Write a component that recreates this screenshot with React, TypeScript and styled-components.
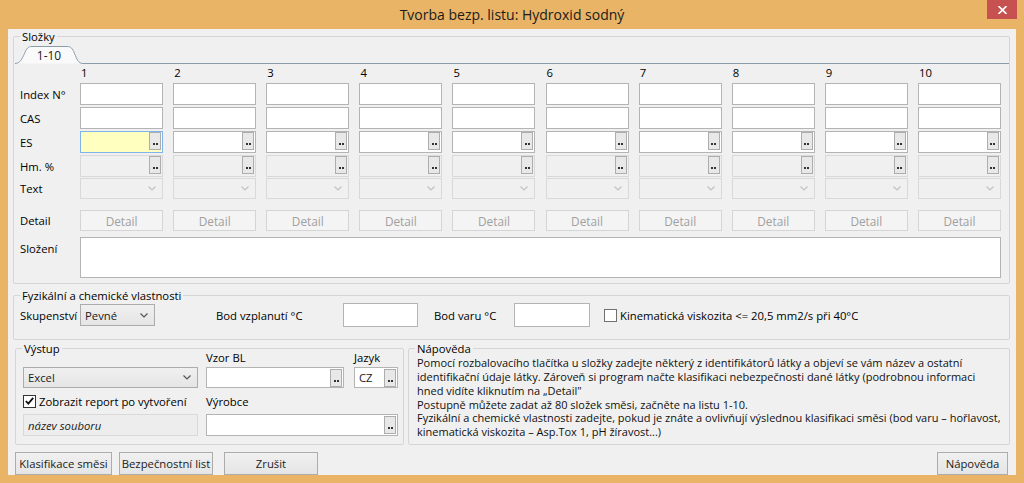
import React from 'react';
import styled, { createGlobalStyle } from 'styled-components';

const GlobalStyle = createGlobalStyle`
  html, body { margin: 0; padding: 0; }
  body {
    width: 1024px;
    height: 483px;
    overflow: hidden;
    font-family: 'Segoe UI', 'Open Sans', 'Noto Sans', sans-serif;
    font-size: 11.3px;
    color: #000;
  }
  * { box-sizing: border-box; }
`;

const Window = styled.div`
  width: 1024px;
  height: 483px;
  background: #e9b466;
  display: flex;
  flex-direction: column;
  padding: 0 8px 8px;
`;

const TitleBar = styled.div`
  height: 29px;
  display: grid;
  grid-template-columns: 1fr auto 1fr;
  align-items: center;
`;

const Title = styled.div`
  grid-column: 2;
  font-size: 14px;
  color: #1b1b1b;
  padding-bottom: 1px;
`;

const CloseButton = styled.div`
  grid-column: 3;
  justify-self: end;
  align-self: start;
  width: 30px;
  height: 19px;
  margin-right: -1px;
  background: #c75050;
  display: flex;
  align-items: center;
  justify-content: center;
`;

const Body = styled.div`
  flex: 1;
  background: #f0f0f0;
  display: flex;
  flex-direction: column;
  padding: 0 6px 0 5px;
`;

const GroupBox = styled.fieldset<{ $pb: number; $mt?: number; $w?: number }>`
  margin: ${p => p.$mt ?? 0}px 0 0;
  padding: 0 0 ${p => p.$pb}px;
  border: 1px solid #d5d5d5;
  border-radius: 2px;
  min-width: 0;
  ${p => (p.$w ? `width: ${p.$w}px; flex: none;` : 'flex: 1;')}
`;

const Legend = styled.legend`
  padding: 0 2px;
  margin-left: 6px;
  line-height: 15px;
`;

const TabStrip = styled.div`
  display: flex;
  align-items: flex-end;
  height: 18px;
  margin-top: 2px;
  padding-left: 1px;
`;

const Tab = styled.div`
  position: relative;
  width: 68px;
  height: 18px;
  display: flex;
  align-items: center;
  justify-content: center;
  padding-top: 1px;
  font-size: 12px;
  color: #1b1b1b;
`;

const TabShape = styled.svg`
  position: absolute;
  inset: 0;
`;

const TabText = styled.span`
  position: relative;
`;

const TabLine = styled.div`
  flex: 1;
  height: 1px;
  background: #8c9baa;
`;

const GridRow = styled.div<{ $h: number; $mt?: number; $top?: boolean }>`
  display: grid;
  grid-template-columns: 50px repeat(10, 83px);
  column-gap: 10.1px;
  height: ${p => p.$h}px;
  margin-top: ${p => p.$mt ?? 0}px;
  padding-left: 6px;
  align-items: ${p => (p.$top ? 'stretch' : 'center')};
`;

const RowLabel = styled.div<{ $top?: boolean }>`
  white-space: nowrap;
  padding-top: ${p => (p.$top ? 4 : 0)}px;
`;

const ColNum = styled.div`
  align-self: end;
  padding-bottom: 3px;
  padding-left: 1px;
`;

const TextBox = styled.div<{ $disabled?: boolean; $focus?: boolean; $muted?: boolean }>`
  height: 100%;
  display: flex;
  align-items: flex-start;
  justify-content: flex-end;
  padding: 0 1px;
  background: ${p => (p.$focus ? '#ffffbf' : p.$muted ? '#ededed' : p.$disabled ? '#f0f0f0' : '#fff')};
  border: 1px solid ${p => (p.$focus ? '#7eb4ea' : p.$disabled || p.$muted ? '#d9d9d9' : '#b4b4b4')};
`;

const BoxText = styled.span<{ $italic?: boolean }>`
  flex: 1;
  align-self: center;
  padding-left: 3px;
  font-style: ${p => (p.$italic ? 'italic' : 'normal')};
  color: #1b1b1b;
`;

const Ellipsis = styled.div`
  width: 12px;
  height: 18px;
  border: 1px solid #adadad;
  background: #e8e8e8;
  display: flex;
  align-items: flex-end;
  justify-content: center;
  gap: 1px;
  padding-bottom: 4px;
`;

const Dot = styled.span`
  width: 2px;
  height: 2px;
  background: #333;
`;

const Combo = styled.div<{ $disabled?: boolean }>`
  height: 100%;
  display: flex;
  align-items: center;
  justify-content: space-between;
  padding: 0 6px 0 4px;
  background: ${p => (p.$disabled ? '#f0f0f0' : 'linear-gradient(#f0f0f0, #e5e5e5)')};
  border: 1px solid ${p => (p.$disabled ? '#d9d9d9' : '#acacac')};
  color: #1b1b1b;
`;

const DetailButton = styled.div`
  height: 100%;
  display: flex;
  align-items: center;
  justify-content: center;
  background: #f4f4f4;
  border: 1px solid #d5d5d5;
  color: #a0a0a0;
  font-size: 11.8px;
`;

const Memo = styled.div`
  grid-column: 2 / -1;
  background: #fff;
  border: 1px solid #b4b4b4;
`;

const PropsRow = styled.div`
  display: flex;
  align-items: center;
  height: 24px;
  padding-left: 6px;
`;

const Label = styled.div<{ $w?: number; $ml?: number }>`
  white-space: nowrap;
  ${p => (p.$w ? `width: ${p.$w}px; flex: none;` : '')}
  margin-left: ${p => p.$ml ?? 0}px;
`;

const Field = styled.div<{ $w: number; $h: number }>`
  width: ${p => p.$w}px;
  height: ${p => p.$h}px;
  flex: none;
`;

const CheckBox = styled.div<{ $checked?: boolean; $ml?: number }>`
  width: 13px;
  height: 13px;
  flex: none;
  border: 1px solid ${p => (p.$checked ? '#333' : '#707070')};
  background: #fff;
  margin: 0 3px 0 ${p => p.$ml ?? 0}px;
  display: flex;
  align-items: center;
  justify-content: center;
`;

const BoxesRow = styled.div`
  display: flex;
  gap: 4px;
  margin-top: 1px;
  padding-left: 2px;
`;

const OutGrid = styled.div`
  display: grid;
  grid-template-columns: 175px 138px 46px;
  grid-template-rows: 16px 21px 22px 22px;
  column-gap: 8px;
  row-gap: 2px;
  margin-top: -7px;
  padding-left: 7px;
  align-items: center;
`;

const Cell = styled.div<{ $col: number; $end?: boolean; $span?: number }>`
  grid-column: ${p => p.$col} / span ${p => p.$span ?? 1};
  height: 100%;
  display: flex;
  align-items: center;
  white-space: nowrap;
  ${p => (p.$end ? 'justify-self: end; width: 44px;' : '')}
`;

const HelpText = styled.div`
  padding: 0 8px;
  font-size: 11px;
  line-height: 13.8px;
  color: #111;
`;

const HelpLine = styled.div`
  white-space: nowrap;
`;

const ButtonRow = styled.div`
  display: flex;
  height: 23px;
  margin-top: 7px;
  padding: 0 2px;
`;

const Button = styled.div<{ $w: number; $ml?: number }>`
  width: ${p => p.$w}px;
  margin-left: ${p => p.$ml ?? 0}px;
  display: flex;
  align-items: center;
  justify-content: center;
  background: linear-gradient(#f0f0f0, #e5e5e5);
  border: 1px solid #acacac;
  white-space: nowrap;
  color: #1b1b1b;
`;

const Spacer = styled.div`
  flex: 1;
`;

const Chevron = ({ color }: { color: string }) => (
  <svg width="8" height="5" viewBox="0 0 8 5">
    <path d="M0.5 0.5 L4 4 L7.5 0.5" fill="none" stroke={color} strokeWidth="1.2" />
  </svg>
);

const Dots = () => (
  <Ellipsis>
    <Dot />
    <Dot />
  </Ellipsis>
);

const cols = Array.from({ length: 10 }, (_, i) => i + 1);

function App() {
  return (
    <>
      <GlobalStyle />
      <Window>
        <TitleBar>
          <Title>Tvorba bezp. listu: Hydroxid sodný</Title>
          <CloseButton>
            <svg width="9" height="8" viewBox="0 0 9 8">
              <path d="M0.5 0 L8.5 8 M8.5 0 L0.5 8" stroke="#fff" strokeWidth="1.6" />
            </svg>
          </CloseButton>
        </TitleBar>
        <Body>
          <GroupBox $pb={5}>
            <Legend>Složky</Legend>
            <TabStrip>
              <Tab>
                <TabShape width="68" height="18" viewBox="0 0 68 18">
                  <path
                    d="M0 17.5 C5 17.5 7 13 9.5 7.5 C11.5 2.5 13 0.5 17 0.5 L52 0.5 C56 0.5 57.5 2.5 59.5 7.5 C62 13 63 17.5 68 17.5"
                    fill="#fafafa"
                    stroke="#8c9baa"
                  />
                </TabShape>
                <TabText>1-10</TabText>
              </Tab>
              <TabLine />
            </TabStrip>
            <GridRow $h={19}>
              <div />
              {cols.map(c => (
                <ColNum key={c}>{c}</ColNum>
              ))}
            </GridRow>
            <GridRow $h={22}>
              <RowLabel>Index N°</RowLabel>
              {cols.map(c => (
                <TextBox key={c} />
              ))}
            </GridRow>
            <GridRow $h={22} $mt={2}>
              <RowLabel>CAS</RowLabel>
              {cols.map(c => (
                <TextBox key={c} />
              ))}
            </GridRow>
            <GridRow $h={22} $mt={2}>
              <RowLabel>ES</RowLabel>
              {cols.map(c => (
                <TextBox key={c} $focus={c === 1}>
                  <Dots />
                </TextBox>
              ))}
            </GridRow>
            <GridRow $h={22} $mt={2}>
              <RowLabel>Hm. %</RowLabel>
              {cols.map(c => (
                <TextBox key={c} $disabled>
                  <Dots />
                </TextBox>
              ))}
            </GridRow>
            <GridRow $h={21} $mt={1}>
              <RowLabel>Text</RowLabel>
              {cols.map(c => (
                <Combo key={c} $disabled>
                  <span />
                  <Chevron color="#c2c2c2" />
                </Combo>
              ))}
            </GridRow>
            <GridRow $h={21} $mt={11}>
              <RowLabel>Detail</RowLabel>
              {cols.map(c => (
                <DetailButton key={c}>Detail</DetailButton>
              ))}
            </GridRow>
            <GridRow $h={41} $mt={6} $top>
              <RowLabel $top>Složení</RowLabel>
              <Memo />
            </GridRow>
          </GroupBox>

          <GroupBox $pb={7} $mt={4}>
            <Legend>Fyzikální a chemické vlastnosti</Legend>
            <PropsRow>
              <Label $w={60}>Skupenství</Label>
              <Field $w={75} $h={22}>
                <Combo>
                  <span>Pevné</span>
                  <Chevron color="#555" />
                </Combo>
              </Field>
              <Label $w={127} $ml={61}>Bod vzplanutí °C</Label>
              <Field $w={75} $h={24}>
                <TextBox />
              </Field>
              <Label $w={80} $ml={16}>Bod varu °C</Label>
              <Field $w={76} $h={24}>
                <TextBox />
              </Field>
              <CheckBox $ml={14} />
              <Label>Kinematická viskozita &lt;= 20,5 mm2/s při 40°C</Label>
            </PropsRow>
          </GroupBox>

          <BoxesRow>
            <GroupBox $pb={5} $w={389}>
              <Legend>Výstup</Legend>
              <OutGrid>
                <Cell $col={2}>Vzor BL</Cell>
                <Cell $col={3} $end>Jazyk</Cell>
                <Cell $col={1}>
                  <Combo style={{ width: '100%' }}>
                    <span>Excel</span>
                    <Chevron color="#555" />
                  </Combo>
                </Cell>
                <Cell $col={2}>
                  <TextBox style={{ width: '100%', alignItems: 'center' }}>
                    <Dots />
                  </TextBox>
                </Cell>
                <Cell $col={3} $end>
                  <TextBox style={{ width: '100%', alignItems: 'center' }}>
                    <BoxText>CZ</BoxText>
                    <Dots />
                  </TextBox>
                </Cell>
                <Cell $col={1}>
                  <CheckBox $checked>
                    <svg width="9" height="8" viewBox="0 0 9 8">
                      <path d="M0.8 4 L3.3 6.6 L8.2 0.8" fill="none" stroke="#111" strokeWidth="1.8" />
                    </svg>
                  </CheckBox>
                  Zobrazit report po vytvoření
                </Cell>
                <Cell $col={2}>Výrobce</Cell>
                <Cell $col={1}>
                  <TextBox $muted style={{ width: '100%' }}>
                    <BoxText $italic>název souboru</BoxText>
                  </TextBox>
                </Cell>
                <Cell $col={2} $span={2}>
                  <TextBox style={{ width: '100%', alignItems: 'center' }}>
                    <Dots />
                  </TextBox>
                </Cell>
              </OutGrid>
            </GroupBox>
            <GroupBox $pb={5}>
              <Legend>Nápověda</Legend>
              <HelpText>
                <HelpLine>Pomocí rozbalovacího tlačítka u složky zadejte některý z identifikátorů látky a objeví se vám název a ostatní</HelpLine>
                <HelpLine>identifikační údaje látky. Zároveň si program načte klasifikaci nebezpečnosti dané látky (podrobnou informaci</HelpLine>
                <HelpLine>hned vidíte kliknutím na „Detail"</HelpLine>
                <HelpLine>Postupně můžete zadat až 80 složek směsi, začněte na listu 1-10.</HelpLine>
                <HelpLine>Fyzikální a chemické vlastnosti zadejte, pokud je znáte a ovlivňují výslednou klasifikaci směsi (bod varu – hořlavost,</HelpLine>
                <HelpLine>kinematická viskozita – Asp.Tox 1, pH žíravost...)</HelpLine>
              </HelpText>
            </GroupBox>
          </BoxesRow>

          <ButtonRow>
            <Button $w={97}>Klasifikace směsi</Button>
            <Button $w={94} $ml={7}>Bezpečnostní list</Button>
            <Button $w={94} $ml={11}>Zrušit</Button>
            <Spacer />
            <Button $w={71}>Nápověda</Button>
          </ButtonRow>
        </Body>
      </Window>
    </>
  );
}

export default App;
